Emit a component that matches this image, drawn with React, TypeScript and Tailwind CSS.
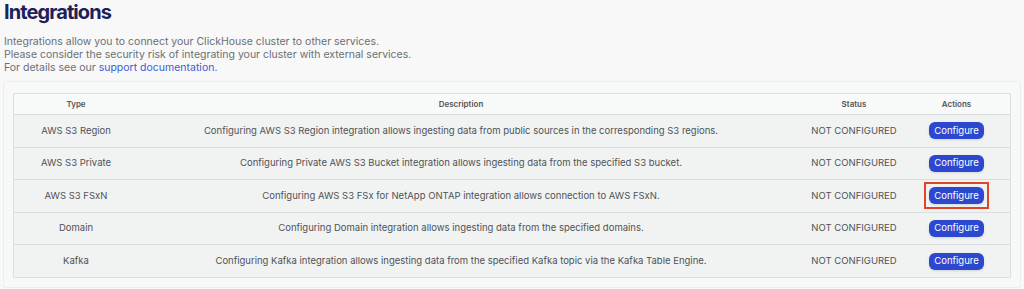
import React from "react";

type Row = { type: string; description: string; highlighted?: boolean };

const rows: Row[] = [
  {
    type: "AWS S3 Region",
    description:
      "Configuring AWS S3 Region integration allows ingesting data from public sources in the corresponding S3 regions.",
  },
  {
    type: "AWS S3 Private",
    description:
      "Configuring Private AWS S3 Bucket integration allows ingesting data from the specified S3 bucket.",
  },
  {
    type: "AWS S3 FSxN",
    description:
      "Configuring AWS S3 FSx for NetApp ONTAP integration allows connection to AWS FSxN.",
    highlighted: true,
  },
  {
    type: "Domain",
    description:
      "Configuring Domain integration allows ingesting data from the specified domains.",
  },
  {
    type: "Kafka",
    description:
      "Configuring Kafka integration allows ingesting data from the specified Kafka topic via the Kafka Table Engine.",
  },
];

const cols = "grid grid-cols-[124px_646px_140px_65px_1fr]";

export default function App() {
  return (
    <div
      className="min-h-[289px] w-[1024px] bg-[#f8f8f9] text-[#555]"
      style={{ fontFamily: "Inter, 'Noto Sans', sans-serif" }}
    >
      <div className="px-[4px] pt-0">
        <h1 className="text-[20px] font-bold leading-[24px] tracking-[-0.9px] text-[#1c2157]">
          Integrations
        </h1>
        <div className="mt-[11px] text-[10.5px] leading-[13px] text-[#6b6f73]">
          <p>Integrations allow you to connect your ClickHouse cluster to other services.</p>
          <p>Please consider the security risk of integrating your cluster with external services.</p>
          <p>
            For details see our{" "}
            <a className="text-[#3d5bd6]" href="#">
              support documentation.
            </a>
          </p>
        </div>
      </div>

      <div className="mx-[3px] mt-[7px] rounded-[3px] border border-[#eceeee] bg-[#f7f8f8] px-[9px] pb-[9px] pt-[11px]">
        <div className="border border-[#dcdfdf]">
          <div className={`${cols} h-[20px] items-center bg-[#f8f9f9] text-[8px] font-semibold text-[#555]`}>
            <div className="text-center">Type</div>
            <div className="text-center">Description</div>
            <div className="text-center">Status</div>
            <div className="text-center">Actions</div>
            <div />
          </div>
          {rows.map((r) => (
            <div
              key={r.type}
              className={`${cols} h-[32.6px] items-center border-t border-[#d9dddd] bg-[#f1f3f3] text-[9.5px] text-[#4f5255]`}
            >
              <div className="text-center">{r.type}</div>
              <div className="text-center">{r.description}</div>
              <div className="text-center">NOT CONFIGURED</div>
              <div className="flex justify-center">
                {r.highlighted ? (
                  <div className="border-[2px] border-[#e0452a] px-[3px] py-[3px]">
                    <button className="h-[17px] w-[55px] rounded-[6px] bg-[#2c48cf] text-[9.5px] text-white shadow-sm">
                      Configure
                    </button>
                  </div>
                ) : (
                  <button className="h-[17px] w-[55px] rounded-[6px] bg-[#2c48cf] text-[9.5px] text-white shadow-sm">
                    Configure
                  </button>
                )}
              </div>
              <div />
            </div>
          ))}
        </div>
      </div>
    </div>
  );
}
